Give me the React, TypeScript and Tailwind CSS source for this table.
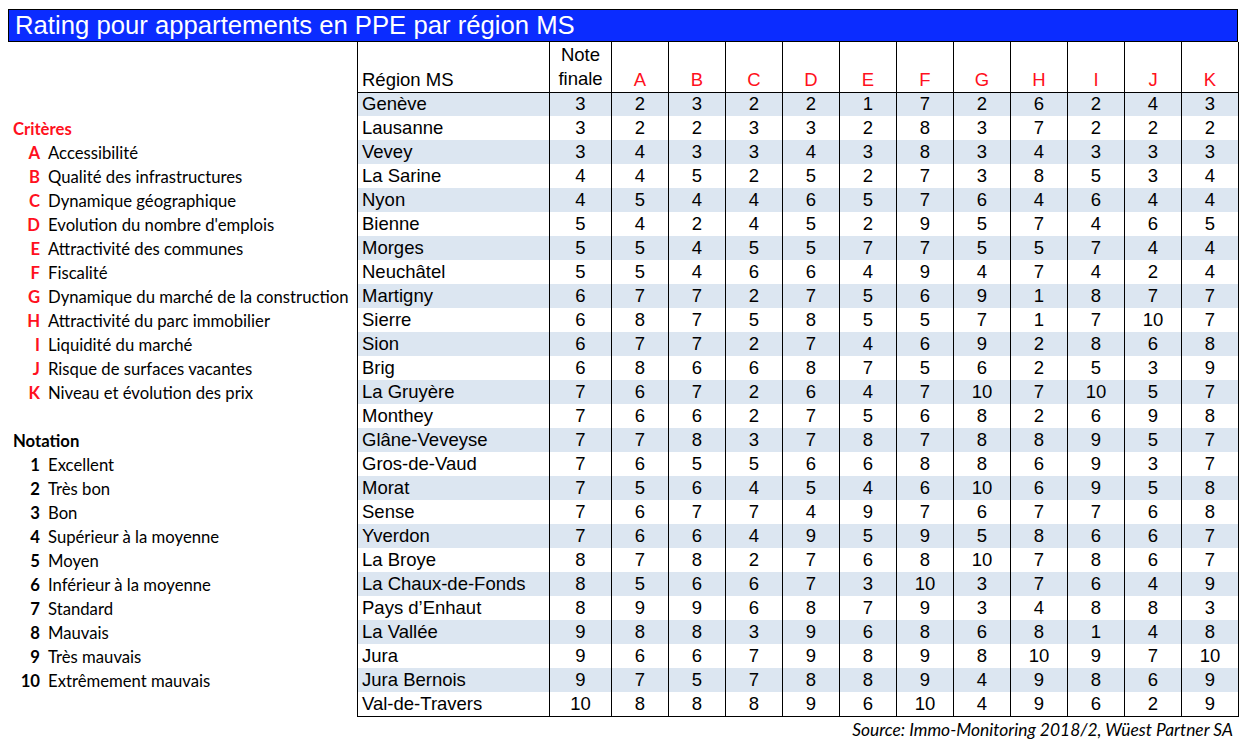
const criteria: [string, string][] = [
  ['A', 'Accessibilité'],
  ['B', 'Qualité des infrastructures'],
  ['C', 'Dynamique géographique'],
  ['D', "Evolution du nombre d'emplois"],
  ['E', 'Attractivité des communes'],
  ['F', 'Fiscalité'],
  ['G', 'Dynamique du marché de la construction'],
  ['H', 'Attractivité du parc immobilier'],
  ['I', 'Liquidité du marché'],
  ['J', 'Risque de surfaces vacantes'],
  ['K', 'Niveau et évolution des prix'],
]

const notation: [string, string][] = [
  ['1', 'Excellent'],
  ['2', 'Très bon'],
  ['3', 'Bon'],
  ['4', 'Supérieur à la moyenne'],
  ['5', 'Moyen'],
  ['6', 'Inférieur à la moyenne'],
  ['7', 'Standard'],
  ['8', 'Mauvais'],
  ['9', 'Très mauvais'],
  ['10', 'Extrêmement mauvais'],
]

// region, note finale, A..K
const rows: [string, number, number[]][] = [
  ['Genève', 3, [2, 3, 2, 2, 1, 7, 2, 6, 2, 4, 3]],
  ['Lausanne', 3, [2, 2, 3, 3, 2, 8, 3, 7, 2, 2, 2]],
  ['Vevey', 3, [4, 3, 3, 4, 3, 8, 3, 4, 3, 3, 3]],
  ['La Sarine', 4, [4, 5, 2, 5, 2, 7, 3, 8, 5, 3, 4]],
  ['Nyon', 4, [5, 4, 4, 6, 5, 7, 6, 4, 6, 4, 4]],
  ['Bienne', 5, [4, 2, 4, 5, 2, 9, 5, 7, 4, 6, 5]],
  ['Morges', 5, [5, 4, 5, 5, 7, 7, 5, 5, 7, 4, 4]],
  ['Neuchâtel', 5, [5, 4, 6, 6, 4, 9, 4, 7, 4, 2, 4]],
  ['Martigny', 6, [7, 7, 2, 7, 5, 6, 9, 1, 8, 7, 7]],
  ['Sierre', 6, [8, 7, 5, 8, 5, 5, 7, 1, 7, 10, 7]],
  ['Sion', 6, [7, 7, 2, 7, 4, 6, 9, 2, 8, 6, 8]],
  ['Brig', 6, [8, 6, 6, 8, 7, 5, 6, 2, 5, 3, 9]],
  ['La Gruyère', 7, [6, 7, 2, 6, 4, 7, 10, 7, 10, 5, 7]],
  ['Monthey', 7, [6, 6, 2, 7, 5, 6, 8, 2, 6, 9, 8]],
  ['Glâne-Veveyse', 7, [7, 8, 3, 7, 8, 7, 8, 8, 9, 5, 7]],
  ['Gros-de-Vaud', 7, [6, 5, 5, 6, 6, 8, 8, 6, 9, 3, 7]],
  ['Morat', 7, [5, 6, 4, 5, 4, 6, 10, 6, 9, 5, 8]],
  ['Sense', 7, [6, 7, 7, 4, 9, 7, 6, 7, 7, 6, 8]],
  ['Yverdon', 7, [6, 6, 4, 9, 5, 9, 5, 8, 6, 6, 7]],
  ['La Broye', 8, [7, 8, 2, 7, 6, 8, 10, 7, 8, 6, 7]],
  ['La Chaux-de-Fonds', 8, [5, 6, 6, 7, 3, 10, 3, 7, 6, 4, 9]],
  ['Pays d\u2019Enhaut', 8, [9, 9, 6, 8, 7, 9, 3, 4, 8, 8, 3]],
  ['La Vallée', 9, [8, 8, 3, 9, 6, 8, 6, 8, 1, 4, 8]],
  ['Jura', 9, [6, 6, 7, 9, 8, 9, 8, 10, 9, 7, 10]],
  ['Jura Bernois', 9, [7, 5, 7, 8, 8, 9, 4, 9, 8, 6, 9]],
  ['Val-de-Travers', 10, [8, 8, 8, 9, 6, 10, 4, 9, 6, 2, 9]],
]

const letters = ['A', 'B', 'C', 'D', 'E', 'F', 'G', 'H', 'I', 'J', 'K']

function LegendRow({ k, label, red }: { k: string; label: string; red?: boolean }) {
  return (
    <div className="flex h-[24px] items-center">
      <span className={`w-[32px] text-right font-bold ${red ? 'text-[#ff1020]' : 'text-black'}`}>{k}</span>
      <span className="ml-[8px] whitespace-nowrap">{label}</span>
    </div>
  )
}

export default function App() {
  return (
    <div className="min-h-[749px] w-[1250px] bg-white pt-[9px]">
      <div className="ml-[8px] w-[1230px]">
        <div className="flex h-[33px] items-center border border-black bg-[#0b2cff] pl-[6px] font-['Liberation_Sans',Arial,sans-serif] text-[25.7px] text-white">
          Rating pour appartements en PPE par région MS
        </div>

        <div className="flex">
          <div className="w-[349px] pt-[76px] font-['Lato',sans-serif] text-[16.7px] text-black">
            <div className="flex h-[24px] items-center pl-[5px] font-bold text-[#ff1020]">Critères</div>
            {criteria.map(([k, label]) => (
              <LegendRow key={k} k={k} label={label} red />
            ))}
            <div className="h-[24px]" />
            <div className="flex h-[24px] items-center pl-[5px] font-bold">Notation</div>
            {notation.map(([k, label]) => (
              <LegendRow key={k} k={k} label={label} />
            ))}
          </div>

          <div className="w-[881px]">
            <table className="w-[881px] table-fixed border-collapse font-['Liberation_Sans',Arial,sans-serif] text-[18.5px] leading-[22px] text-black">
              <colgroup>
                <col className="w-[192px]" />
                <col className="w-[62px]" />
                {letters.map((l) => (
                  <col key={l} className="w-[57px]" />
                ))}
              </colgroup>
              <thead>
                <tr className="h-[50px] border-b border-black">
                  <th className="border-x border-black px-[4px] pb-[1px] text-left align-bottom font-normal">Région MS</th>
                  <th className="border-x border-black pb-[1px] text-center align-bottom font-normal leading-[24px]">
                    Note
                    <br />
                    finale
                  </th>
                  {letters.map((l) => (
                    <th key={l} className="border-x border-black pb-[1px] text-center align-bottom font-normal text-[#ff1020]">
                      {l}
                    </th>
                  ))}
                </tr>
              </thead>
              <tbody>
                {rows.map(([name, note, vals], i) => (
                  <tr key={name} className={`h-[24px] ${i % 2 === 0 ? 'bg-[#dce6f1]' : 'bg-white'} ${i === rows.length - 1 ? 'border-b border-black' : ''}`}>
                    <td className="border-x border-black px-[4px] py-0 whitespace-nowrap">{name}</td>
                    <td className="border-x border-black py-0 text-center">{note}</td>
                    {vals.map((v, j) => (
                      <td key={j} className="border-x border-black py-0 text-center">
                        {v}
                      </td>
                    ))}
                  </tr>
                ))}
              </tbody>
            </table>
            <div className="flex h-[28px] items-center justify-end pr-[5px] font-['Lato',sans-serif] text-[17.4px] italic">
              Source: Immo-Monitoring 2018/2, Wüest Partner SA
            </div>
          </div>
        </div>
      </div>
    </div>
  )
}
